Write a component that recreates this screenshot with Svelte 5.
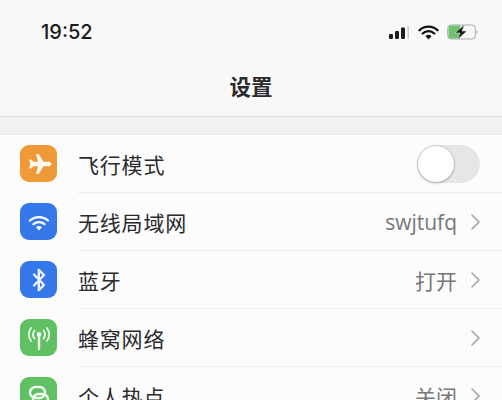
<script>
  const rows = [
    { name: '飞行模式', icon: 'plane', color: '#f09a37', toggle: true },
    { name: '无线局域网', icon: 'wifi', color: '#3478ea', value: 'swjtufq' },
    { name: '蓝牙', icon: 'bluetooth', color: '#3478ea', value: '打开' },
    { name: '蜂窝网络', icon: 'cell', color: '#5fc163' },
    { name: '个人热点', icon: 'hotspot', color: '#5fc163', value: '关闭' }
  ]
</script>

<div class="phone">
  <header>
    <div class="status">
      <span class="time">19:52</span>
      <div class="status-icons">
        <svg width="21" height="15" viewBox="0 0 21 15">
          <rect x="0" y="9" width="4" height="5" rx="1.200" fill="#1c1c1e" />
          <rect x="6" y="6" width="4" height="8" rx="1.200" fill="#1c1c1e" />
          <rect x="12" y="2.500" width="4" height="11.500" rx="1.200" fill="#1c1c1e" />
          <rect x="18.500" y="1" width="1.400" height="13" rx="0.700" fill="#c4c4c8" />
        </svg>
        <svg width="21" height="15" viewBox="0 0 21 15">
          <path d="M1.500 5.200a13 13 0 0 1 18 0M4.700 8.500a8.500 8.500 0 0 1 11.600 0" fill="none" stroke="#111" stroke-width="2.300" stroke-linecap="round" />
          <path d="M10.500 14.500l-3-3.200a4.300 4.300 0 0 1 6 0z" fill="#111" />
        </svg>
        <svg width="32" height="16" viewBox="0 0 32 16">
          <rect x="0.700" y="1" width="27.600" height="14" rx="3.500" fill="#f7f7f8" stroke="#a9a9ac" stroke-width="1" />
          <path d="M1.500 4a2.500 2.500 0 0 1 2.500-2.500H13v13H4a2.500 2.500 0 0 1-2.500-2.500z" fill="#6cc46f" />
          <path d="M29.500 6a2.500 2.500 0 0 1 0 4z" fill="#a9a9ac" />
          <path d="M17.500 0.500L8 9h5l-2.500 6.500L20 7h-5z" fill="#1a1a1a" stroke="#f7f7f8" stroke-width="0.500" />
        </svg>
      </div>
    </div>
    <h1>设置</h1>
  </header>
  <div class="band"></div>

  <ul>
    {#each rows as row}
      <li>
        <span class="icon" style="background: {row.color}">
          {#if row.icon === 'plane'}
            <svg width="28" height="28" viewBox="0 0 28 28">
              <path d="M11 4h2.600l5 7.800h5c1.600 0 2.900 1 2.900 2.200s-1.300 2.200-2.900 2.200h-5l-5 7.800H11l2-7.800H8.300l-2 2.400H4l1.300-4.600L4 9.400h2.300l2 2.400H13z" fill="#fff8ee" />
            </svg>
          {:else if row.icon === 'wifi'}
            <svg width="28" height="28" viewBox="0 0 28 28">
              <path d="M5 12.500a13.500 13.500 0 0 1 18 0M8.500 16.200a8.500 8.500 0 0 1 11 0" fill="none" stroke="#fff" stroke-width="2.200" stroke-linecap="round" />
              <path d="M14 22.500l-3-3.200a4.500 4.500 0 0 1 6 0z" fill="#fff" />
            </svg>
          {:else if row.icon === 'bluetooth'}
            <svg width="28" height="30" viewBox="0 0 28 30">
              <path d="M9 9.500l10 10.500-5.200 5.200V4.800L19 10 9 20.500" fill="none" stroke="#eef4ff" stroke-width="2.400" stroke-linejoin="round" stroke-linecap="round" />
            </svg>
          {:else if row.icon === 'cell'}
            <svg width="30" height="30" viewBox="0 0 30 30">
              <path d="M15 13v13" stroke="#eefbee" stroke-width="2.400" stroke-linecap="round" />
              <circle cx="15" cy="11.500" r="2.400" fill="#eefbee" />
              <path d="M10.500 7.500a6.500 6.500 0 0 0 0 8M19.500 7.500a6.500 6.500 0 0 1 0 8M7 5a11 11 0 0 0 0 13M23 5a11 11 0 0 1 0 13" fill="none" stroke="#eefbee" stroke-width="1.800" stroke-linecap="round" />
            </svg>
          {:else}
            <svg width="30" height="30" viewBox="0 0 30 30">
              <rect x="6" y="6" width="15" height="11" rx="5.500" fill="none" stroke="#eefbee" stroke-width="2.400" />
              <rect x="9" y="13" width="15" height="11" rx="5.500" fill="none" stroke="#eefbee" stroke-width="2.400" />
            </svg>
          {/if}
        </span>
        <div class="row-body">
          <span class="name">{row.name}</span>
          {#if row.toggle}
            <span class="toggle"><span class="knob"></span></span>
          {:else}
            {#if row.value}<span class="value">{row.value}</span>{/if}
            <svg class="chev" width="11" height="18" viewBox="0 0 11 18">
              <path d="M2 2l7 7-7 7" fill="none" stroke="#a4a4a8" stroke-width="1.600" stroke-linecap="round" stroke-linejoin="round" />
            </svg>
          {/if}
        </div>
      </li>
    {/each}
  </ul>
</div>

<style>
  :global(body) {
    margin: 0;
    background: #fcfcfc;
  }

  .phone {
    width: 502px;
    height: 400px;
    overflow: hidden;
    font-family: "Liberation Sans", "Noto Sans CJK SC", sans-serif;
  }

  header {
    height: 117px;
    box-sizing: border-box;
    padding-top: 20px;
    background: #f8f8f9;
    border-bottom: 1px solid #dfdfe2;
  }

  .status {
    display: flex;
    justify-content: space-between;
    align-items: center;
    height: 24px;
    padding: 0 23px 0 41px;
  }

  .time {
    font-family: Inter, "Liberation Sans", sans-serif;
    font-size: 20px;
    font-weight: 500;
    color: #1a1a1c;
  }

  .status-icons {
    display: flex;
    align-items: center;
    gap: 8px;
  }

  h1 {
    margin: 30px 0 0;
    text-align: center;
    font-size: 21.500px;
    line-height: 28px;
    font-weight: 700;
    color: #2b2b2e;
  }

  .band {
    height: 17px;
    background: #f2f2f4;
    border-bottom: 1px solid #ececef;
  }

  ul {
    margin: 0;
    padding: 0;
    list-style: none;
  }

  li {
    display: flex;
    height: 58px;
    padding-left: 20px;
  }

  .icon {
    flex: none;
    width: 37px;
    height: 37px;
    margin-top: 10px;
    border-radius: 9px;
    display: flex;
    align-items: center;
    justify-content: center;
  }

  .row-body {
    flex: 1;
    display: flex;
    align-items: center;
    margin-left: 21px;
    padding-right: 21px;
    border-bottom: 1px solid #eeeef0;
  }

  .name {
    flex: 1;
    font-size: 21px;
    letter-spacing: 0.800px;
    color: #2a2a2d;
  }

  .value {
    font-family: "Open Sans", "Noto Sans CJK SC", sans-serif;
    font-size: 21px;
    color: #77777c;
    margin-right: 13px;
  }

  .toggle {
    display: block;
    width: 63px;
    height: 38px;
    margin-right: 1px;
    border-radius: 19px;
    background: #e6e6e8;
  }

  .knob {
    display: block;
    width: 36px;
    height: 36px;
    margin: 1px;
    border-radius: 50%;
    background: #fff;
    box-shadow: 0 0 0 1px rgba(0, 0, 0, 0.08), 0 1px 3px rgba(0, 0, 0, 0.25);
  }

  .chev {
    flex: none;
  }
</style>
